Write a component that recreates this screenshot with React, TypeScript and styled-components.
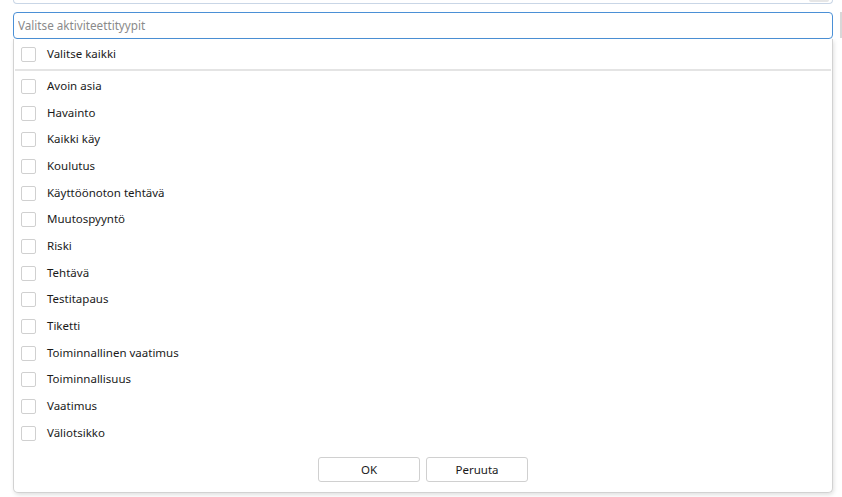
import React, { useState } from "react";
import styled, { createGlobalStyle } from "styled-components";

const GlobalStyle = createGlobalStyle`
  html, body {
    margin: 0;
    padding: 0;
    background: #ffffff;
  }
  body {
    font-family: "Noto Sans", "Open Sans", Arial, sans-serif;
    color: #1a1a1a;
  }
`;

const Page = styled.div`
  position: relative;
  width: 842px;
  height: 497px;
  padding: 0 9px 0 13px;
  box-sizing: border-box;
  overflow: hidden;
`;

const PrevField = styled.div`
  position: relative;
  height: 3px;
  border: 1px solid #c9d6e6;
  border-top: none;
  border-radius: 0 0 4px 4px;
`;

const PrevButton = styled.div`
  position: absolute;
  right: 3px;
  top: 0;
  width: 20px;
  height: 2px;
  background: #e6e6e6;
  border-radius: 0 0 2px 2px;
`;

const EdgeBar = styled.div`
  position: absolute;
  right: 0;
  top: 12px;
  width: 2px;
  height: 26px;
  background: #d8d8d8;
`;

const SearchInput = styled.input`
  display: block;
  width: 100%;
  height: 27px;
  margin-top: 8px;
  box-sizing: border-box;
  border: 1px solid #4b90d6;
  border-radius: 4px;
  padding: 0 0 1px 4px;
  font-family: inherit;
  font-size: 11.7px;
  color: #1a1a1a;
  outline: none;
  caret-color: #1a1a1a;
  &::placeholder {
    color: #8a8a8a;
  }
`;

const Panel = styled.div`
  display: flex;
  flex-direction: column;
  height: 454px;
  box-sizing: border-box;
  border: 1px solid #d2d2d2;
  border-top: none;
  border-radius: 0 0 5px 5px;
  box-shadow: 1px 2px 4px rgba(0, 0, 0, 0.12);
  background: #ffffff;
`;

const Row = styled.label<{ $height: number }>`
  display: flex;
  align-items: center;
  gap: 11px;
  height: ${(p) => p.$height}px;
  padding-left: 7px;
  font-size: 11.5px;
  cursor: pointer;
`;

const Label = styled.span`
  margin-top: -2px;
`;

const Box = styled.span<{ $checked: boolean }>`
  width: 15px;
  height: 15px;
  box-sizing: border-box;
  border: 1px solid #d0d0d0;
  border-radius: 2px;
  background: ${(p) => (p.$checked ? "#4b90d6" : "#ffffff")};
  flex: none;
`;

const Separator = styled.div`
  height: 2px;
  margin: 0 1px 2px 1px;
  background: #e4e4e4;
`;

const List = styled.div`
  display: flex;
  flex-direction: column;
`;

const Footer = styled.div`
  display: flex;
  justify-content: center;
  gap: 6px;
  margin-top: auto;
  padding-bottom: 10px;
`;

const Button = styled.button`
  width: 102px;
  height: 25px;
  border: 1px solid #d0d0d0;
  border-radius: 3px;
  background: #ffffff;
  font-family: inherit;
  font-size: 11.5px;
  color: #1a1a1a;
  cursor: pointer;
`;

const TYPES = [
  "Avoin asia",
  "Havainto",
  "Kaikki käy",
  "Koulutus",
  "Käyttöönoton tehtävä",
  "Muutospyyntö",
  "Riski",
  "Tehtävä",
  "Testitapaus",
  "Tiketti",
  "Toiminnallinen vaatimus",
  "Toiminnallisuus",
  "Vaatimus",
  "Väliotsikko",
];

export default function App() {
  const [selected, setSelected] = useState<string[]>([]);

  const toggle = (name: string) => {
    setSelected((prev) =>
      prev.includes(name) ? prev.filter((n) => n !== name) : [...prev, name]
    );
  };

  const allChecked = selected.length === TYPES.length;

  return (
    <Page>
      <GlobalStyle />
      <PrevField>
        <PrevButton />
      </PrevField>
      <EdgeBar />
      <SearchInput autoFocus placeholder="Valitse aktiviteettityypit" />
      <Panel>
        <Row $height={30} onClick={() => setSelected(allChecked ? [] : TYPES)}>
          <Box $checked={allChecked} />
          <Label>Valitse kaikki</Label>
        </Row>
        <Separator />
        <List>
          {TYPES.map((t) => (
            <Row key={t} $height={26.7} onClick={() => toggle(t)}>
              <Box $checked={selected.includes(t)} />
              <Label>{t}</Label>
            </Row>
          ))}
        </List>
        <Footer>
          <Button>OK</Button>
          <Button>Peruuta</Button>
        </Footer>
      </Panel>
    </Page>
  );
}
